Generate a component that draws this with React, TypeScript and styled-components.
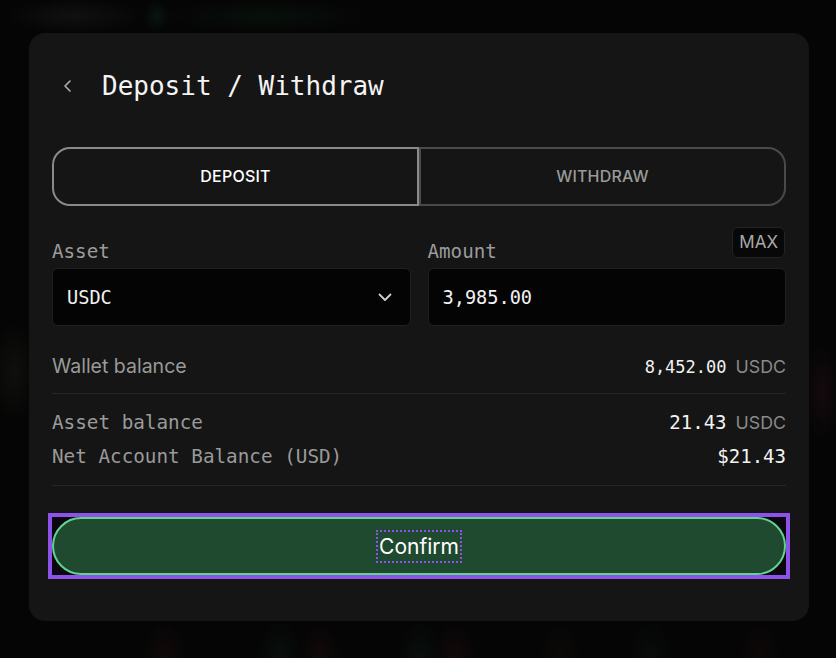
import React from "react";
import styled, { createGlobalStyle } from "styled-components";

const Global = createGlobalStyle`
  html, body {
    margin: 0;
    padding: 0;
    width: 836px;
    height: 658px;
    overflow: hidden;
    background-color: #050505;
    background-image:
      radial-gradient(ellipse 70px 18px at 75px 16px, rgba(30,30,30,0.45), transparent),
      radial-gradient(ellipse 14px 16px at 157px 16px, rgba(15,45,32,0.4), transparent),
      radial-gradient(ellipse 100px 16px at 265px 16px, rgba(12,32,18,0.4), transparent),
      radial-gradient(ellipse 24px 50px at 14px 372px, rgba(35,35,28,0.35), transparent),
      radial-gradient(ellipse 18px 50px at 822px 392px, rgba(50,18,26,0.35), transparent),
      radial-gradient(ellipse 22px 40px at 165px 660px, rgba(50,20,20,0.3), transparent),
      radial-gradient(ellipse 22px 40px at 280px 660px, rgba(18,40,36,0.3), transparent),
      radial-gradient(ellipse 22px 40px at 320px 660px, rgba(50,20,20,0.3), transparent),
      radial-gradient(ellipse 22px 40px at 420px 660px, rgba(18,40,36,0.3), transparent),
      radial-gradient(ellipse 22px 40px at 455px 660px, rgba(50,20,20,0.3), transparent),
      radial-gradient(ellipse 22px 40px at 560px 660px, rgba(50,20,20,0.22), transparent),
      radial-gradient(ellipse 22px 40px at 650px 660px, rgba(18,40,36,0.22), transparent),
      radial-gradient(ellipse 22px 40px at 760px 660px, rgba(50,20,20,0.22), transparent);
  }
  #root {
    padding: 33px 0 0 29px;
  }
`;

const Card = styled.div`
  width: 780px;
  box-sizing: border-box;
  background: #151515;
  border-radius: 16px;
  padding: 36px 23px 42px 23px;
  display: flex;
  flex-direction: column;
`;

const Header = styled.div`
  display: flex;
  align-items: center;
  height: 34px;
  padding-left: 9px;
  gap: 27px;
`;

const BackIcon = styled.svg`
  width: 14px;
  height: 16px;
  display: block;
`;

const Title = styled.h1`
  margin: 0;
  font-family: "DejaVu Sans Mono", "Liberation Mono", monospace;
  font-size: 26px;
  font-weight: 500;
  color: #f4f4f4;
  line-height: 34px;
`;

const Toggle = styled.div`
  margin-top: 44px;
  height: 59px;
  display: grid;
  grid-template-columns: 1fr 1fr;
`;

const Tab = styled.button<{ $active?: boolean; $side: "left" | "right" }>`
  all: unset;
  box-sizing: border-box;
  display: flex;
  align-items: center;
  justify-content: center;
  padding-bottom: 1px;
  font-family: Inter, "Liberation Sans", sans-serif;
  font-size: 16px;
  font-weight: 500;
  letter-spacing: 0.2px;
  color: ${(p) => (p.$active ? "#ffffff" : "#9a9a9a")};
  border: 2px solid ${(p) => (p.$active ? "#8a8a8a" : "#4a4a4a")};
  border-radius: ${(p) => (p.$side === "left" ? "18px 0 0 18px" : "0 18px 18px 0")};
`;

const Fields = styled.div`
  margin-top: 21px;
  display: grid;
  grid-template-columns: 1fr 1fr;
  column-gap: 17px;
`;

const Field = styled.div`
  display: flex;
  flex-direction: column;
`;

const LabelRow = styled.div`
  height: 36px;
  display: flex;
  justify-content: space-between;
  align-items: flex-end;
`;

const Label = styled.span`
  font-family: "DejaVu Sans Mono", "Liberation Mono", monospace;
  font-size: 19.2px;
  line-height: 23px;
  color: #9b9b9b;
`;

const MaxButton = styled.button`
  all: unset;
  align-self: flex-start;
  box-sizing: border-box;
  height: 31px;
  padding: 0 6px;
  border-radius: 6px;
  background: #080808;
  border: 1px solid #232323;
  font-family: Inter, "Liberation Sans", sans-serif;
  font-size: 17px;
  line-height: 29px;
  color: #a8a8a8;
  margin-right: 1px;
`;

const InputBox = styled.div`
  margin-top: 5px;
  height: 58px;
  box-sizing: border-box;
  background: #040404;
  border: 1px solid #202020;
  border-radius: 6px;
  display: flex;
  align-items: center;
  justify-content: space-between;
  padding: 0 18px 0 14px;
  font-family: "DejaVu Sans Mono", "Liberation Mono", monospace;
  font-size: 18.6px;
  color: #f2f2f2;
`;

const Chevron = styled.svg`
  width: 14px;
  height: 9px;
  display: block;
`;

const Row = styled.div<{ $gap: number }>`
  margin-top: ${(p) => p.$gap}px;
  height: 28px;
  display: flex;
  align-items: center;
  justify-content: space-between;
`;

const SansLabel = styled.span`
  font-family: Inter, "Liberation Sans", sans-serif;
  font-size: 19.5px;
  color: #9a9a9a;
`;

const MonoLabel = styled.span`
  font-family: "DejaVu Sans Mono", "Liberation Mono", monospace;
  font-size: 19.3px;
  color: #9a9a9a;
`;

const Value = styled.span`
  display: flex;
  align-items: baseline;
  gap: 9px;
`;

const Amount = styled.span<{ $size: number }>`
  font-family: "DejaVu Sans Mono", "Liberation Mono", monospace;
  font-size: ${(p) => p.$size}px;
  color: #f2f2f2;
`;

const Unit = styled.span`
  font-family: Inter, "Liberation Sans", sans-serif;
  font-size: 17.8px;
  color: #8a8a8a;
`;

const Divider = styled.div<{ $gap: number }>`
  margin-top: ${(p) => p.$gap}px;
  height: 1px;
  background: #262626;
`;

const FocusRing = styled.div`
  margin: 27px -4px 0 -4px;
  border: 4px solid #8d52ea;
  background: #0a0710;
`;

const ConfirmButton = styled.button`
  all: unset;
  box-sizing: border-box;
  width: 100%;
  height: 58px;
  display: flex;
  align-items: center;
  justify-content: center;
  background: #1f4a30;
  border: 2px solid #62d490;
  border-radius: 30px;
`;

const ConfirmText = styled.span`
  font-family: Inter, "Liberation Sans", sans-serif;
  font-size: 21px;
  color: #ffffff;
  outline: 2px dotted #8d52ea;
  outline-offset: 0px;
  padding: 0 1px;
  line-height: 29px;
`;

export default function App() {
  return (
    <>
      <Global />
      <Card>
        <Header>
          <BackIcon viewBox="0 0 14 16">
            <polyline points="9,3 4,8 9,13" fill="none" stroke="#b0b0b0" strokeWidth="1.6" strokeLinecap="round" strokeLinejoin="round" />
          </BackIcon>
          <Title>Deposit / Withdraw</Title>
        </Header>

        <Toggle>
          <Tab $active $side="left">DEPOSIT</Tab>
          <Tab $side="right">WITHDRAW</Tab>
        </Toggle>

        <Fields>
          <Field>
            <LabelRow>
              <Label>Asset</Label>
            </LabelRow>
            <InputBox>
              <span>USDC</span>
              <Chevron viewBox="0 0 14 9">
                <polyline points="1.5,1.5 7,7 12.5,1.5" fill="none" stroke="#d0d0d0" strokeWidth="1.8" strokeLinecap="round" strokeLinejoin="round" />
              </Chevron>
            </InputBox>
          </Field>
          <Field>
            <LabelRow>
              <Label>Amount</Label>
              <MaxButton>MAX</MaxButton>
            </LabelRow>
            <InputBox>
              <span>3,985.00</span>
            </InputBox>
          </Field>
        </Fields>

        <Row $gap={26}>
          <SansLabel>Wallet balance</SansLabel>
          <Value>
            <Amount $size={17}>8,452.00</Amount>
            <Unit>USDC</Unit>
          </Value>
        </Row>
        <Divider $gap={13} />
        <Row $gap={14}>
          <MonoLabel>Asset balance</MonoLabel>
          <Value>
            <Amount $size={19}>21.43</Amount>
            <Unit>USDC</Unit>
          </Value>
        </Row>
        <Row $gap={6}>
          <MonoLabel>Net Account Balance (USD)</MonoLabel>
          <Value>
            <Amount $size={19}>$21.43</Amount>
          </Value>
        </Row>
        <Divider $gap={15} />

        <FocusRing>
          <ConfirmButton>
            <ConfirmText>Confirm</ConfirmText>
          </ConfirmButton>
        </FocusRing>
      </Card>
    </>
  );
}
